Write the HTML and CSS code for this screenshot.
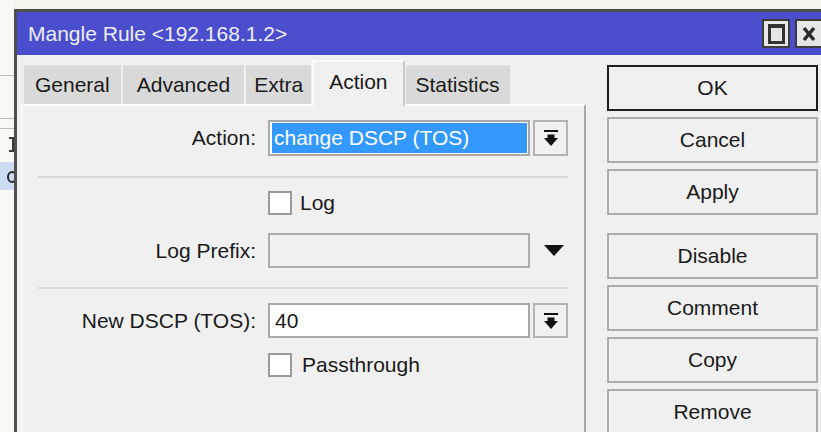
FILE: index.html
```html
<!DOCTYPE html>
<html lang="en">
<head>
<meta charset="utf-8">
<title>Mangle Rule &lt;192.168.1.2&gt;</title>
<link rel="stylesheet" href="styles.css">
</head>
<body>
<div class="desk">
  <!-- strip of the list window lying behind the dialog -->
  <div class="backdrop">
    <div class="bd-rule bd-r1"></div>
    <div class="bd-rule bd-r2"></div>
    <div class="bd-rule bd-r3"></div>
    <div class="bd-mark"></div>
    <div class="bd-selected"><span class="bd-glyph"></span></div>
  </div>

  <div class="window">
    <div class="titlebar">
      <span class="title">Mangle Rule &lt;192.168.1.2&gt;</span>
      <span class="tb-btn">
        <svg width="17" height="20" viewBox="0 0 17 20"><rect x="1.5" y="2" width="14" height="16.5" fill="none" stroke="#333" stroke-width="3"/><rect x="0" y="0" width="17" height="4" fill="#333"/></svg>
      </span>
      <span class="tb-btn">
        <svg width="14" height="16" viewBox="0 0 14 16"><path d="M2 2 L12 14 M12 2 L2 14" stroke="#2b2b2b" stroke-width="3.5" fill="none"/></svg>
      </span>
    </div>

    <div class="win-body">
      <div class="main">
        <div class="tabs">
          <div class="tab tab-general">General</div>
          <div class="tab tab-advanced">Advanced</div>
          <div class="tab tab-extra">Extra</div>
          <div class="tab active">Action</div>
          <div class="tab tab-stats">Statistics</div>
        </div>

        <div class="panel">
          <div class="row row-action">
            <span class="lbl">Action:</span>
            <div class="field field-select"><span class="sel">change DSCP (TOS)</span></div>
            <span class="dd-btn">
              <svg width="14" height="16" viewBox="0 0 14 16"><rect x="0" y="0" width="14" height="2"/><rect x="3.5" y="4.5" width="7" height="3.5"/><polygon points="0,8 14,8 7,16"/></svg>
            </span>
          </div>

          <div class="sep sep-1"></div>

          <div class="check-row check-log">
            <span class="box"></span><span class="check-text">Log</span>
          </div>

          <div class="row row-prefix">
            <span class="lbl">Log Prefix:</span>
            <div class="field field-off"></div>
            <span class="dd-slot">
              <svg width="20" height="11" viewBox="0 0 20 11"><polygon points="0,0 20,0 10,11"/></svg>
            </span>
          </div>

          <div class="sep sep-2"></div>

          <div class="row row-dscp">
            <span class="lbl">New DSCP (TOS):</span>
            <div class="field field-text">40</div>
            <span class="dd-btn">
              <svg width="14" height="16" viewBox="0 0 14 16"><rect x="0" y="0" width="14" height="2"/><rect x="3.5" y="4.5" width="7" height="3.5"/><polygon points="0,8 14,8 7,16"/></svg>
            </span>
          </div>

          <div class="check-row check-pass">
            <span class="box"></span><span class="check-text">Passthrough</span>
          </div>
        </div>
      </div>

      <div class="actions">
        <div class="btn btn-default">OK</div>
        <div class="btn">Cancel</div>
        <div class="btn">Apply</div>
        <div class="btn btn-split">Disable</div>
        <div class="btn">Comment</div>
        <div class="btn">Copy</div>
        <div class="btn">Remove</div>
      </div>
    </div>
  </div>
</div>
</body>
</html>
```

FILE: styles.css
```css
* {
  box-sizing: border-box;
}

html, body {
  margin: 0;
  height: 100%;
  overflow: hidden;
}

body {
  background: #f4f5ec;
  font-family: "Liberation Sans", Arial, sans-serif;
  font-size: 21px;
  color: #1a1a1a;
}

.desk {
  display: flex;
  align-items: flex-start;
  height: 100%;
  overflow: hidden;
}

/* list window behind the dialog */
.backdrop {
  width: 14px;
  height: 100%;
  flex: none;
  background: #f9f9f6;
  overflow: hidden;
}

.bd-rule {
  height: 1px;
  background: #bcbcbc;
}

.bd-r1 { margin-top: 75px; }
.bd-r2 { margin-top: 42px; }
.bd-r3 { margin-top: 9px; }

.bd-mark {
  margin: 8px 0 0 9px;
  width: 5px;
  height: 15px;
  border: 2px solid #3a3a3a;
  border-left: none;
}

.bd-selected {
  margin-top: 10px;
  height: 28px;
  background: #cddcf3;
  overflow: hidden;
  padding: 9px 0 0 7px;
}

/* edge of a row letter, cut by the dialog border */
.bd-glyph {
  display: block;
  width: 10px;
  height: 12px;
  border: 2px solid #2a2a2a;
  border-radius: 50%;
}

/* dialog window */
.window {
  flex: none;
  margin-top: 9px;
  width: 816px;
  height: 423px;
  overflow: hidden;
  background: #f0f0f0;
  border: 3px solid #4f4f4f;
  border-bottom: none;
}

.titlebar {
  height: 43px;
  background: #4b4ecc;
  display: flex;
  align-items: center;
  padding: 0 4px 0 11px;
}

.title {
  flex: 1;
  color: #ededf9;
  white-space: nowrap;
}

.tb-btn {
  width: 28px;
  height: 29px;
  margin-left: 5px;
  background: #e6e6e6;
  border: 2px solid #3c3c3c;
  display: flex;
  align-items: center;
  justify-content: center;
}

.tb-btn svg {
  display: block;
}

.win-body {
  display: flex;
  align-items: flex-start;
}

.main {
  margin-left: 4px;
  width: 565px;
}

/* tab strip */
.tabs {
  height: 49px;
  display: flex;
  align-items: flex-end;
  padding-left: 3px;
}

.tab {
  height: 39px;
  padding: 0 11px;
  margin-right: 2px;
  background: #d9d9d9;
  border-top: 1px solid #e2e2e2;
  display: flex;
  align-items: center;
  white-space: nowrap;
}

.tab-advanced { padding: 0 14px; }
.tab-extra { padding: 0 8px; margin-right: 1px; }
.tab-stats { padding: 0 10px; }

.tab.active {
  position: relative;
  z-index: 1;
  height: 46px;
  margin: 0 1px -2px 0;
  padding: 0 15px 4px 15px;
  background: #f0f0f0;
  border-top: 2px solid #fbfbfb;
  border-left: 2px solid #fbfbfb;
  border-right: 2px solid #c9c9c9;
}

/* tab page */
.panel {
  height: 330px;
  background: #f0f0f0;
  border-top: 2px solid #fbfbfb;
  border-left: 2px solid #fbfbfb;
  border-right: 2px solid #a9a9a9;
}

.row {
  display: flex;
  align-items: center;
}

.lbl {
  width: 233px;
  margin-right: 12px;
  text-align: right;
  white-space: nowrap;
}

.field {
  width: 262px;
  height: 36px;
  border: 2px solid #a9a9a9;
}

.field-select {
  padding: 1px 1px 1px 2px;
  background: #ffffff;
}

.sel {
  display: flex;
  align-items: center;
  height: 100%;
  padding-left: 2px;
  background: #3399ff;
  color: #ffffff;
  white-space: nowrap;
}

.field-off {
  height: 35px;
  background: #f0f0f0;
  border-color: #adadad;
}

.field-text {
  height: 35px;
  background: #ffffff;
  padding-left: 5px;
  display: flex;
  align-items: center;
}

.dd-btn {
  width: 35px;
  height: 36px;
  margin-left: 3px;
  border: 2px solid #b3b3b3;
  background: #f0f0f0;
  display: flex;
  align-items: center;
  justify-content: center;
}

.row-dscp .dd-btn {
  height: 35px;
}

.dd-btn svg,
.dd-slot svg {
  display: block;
  fill: #111;
}

.dd-slot {
  width: 35px;
  margin-left: 3px;
  padding-left: 7px;
  display: flex;
  align-items: center;
  justify-content: center;
}

.row-action { margin-top: 14px; }
.row-prefix { margin-top: 18px; }
.row-dscp { margin-top: 14px; }

.sep {
  width: 530px;
  height: 2px;
  margin-left: 15px;
  background: #dadada;
}

.sep-1 { margin-top: 20px; }
.sep-2 { margin-top: 19px; }

.check-row {
  display: flex;
  align-items: center;
  padding-left: 245px;
  height: 24px;
}

.check-log { margin-top: 13px; }
.check-pass { margin-top: 15px; }

.box {
  width: 24px;
  height: 24px;
  background: #ffffff;
  border: 2px solid #9a9a9a;
}

.check-log .check-text { margin-left: 8px; }
.check-pass .check-text { margin-left: 10px; }

/* command buttons */
.actions {
  margin: 10px 0 0 21px;
  width: 211px;
  display: flex;
  flex-direction: column;
  gap: 6px;
}

.btn {
  flex: none;
  height: 46px;
  background: #f0f0f0;
  border: 2px solid #adadad;
  display: flex;
  align-items: center;
  justify-content: center;
}

.btn-default {
  border-color: #1e1e1e;
}

.btn-split {
  margin-top: 12px;
}
```
